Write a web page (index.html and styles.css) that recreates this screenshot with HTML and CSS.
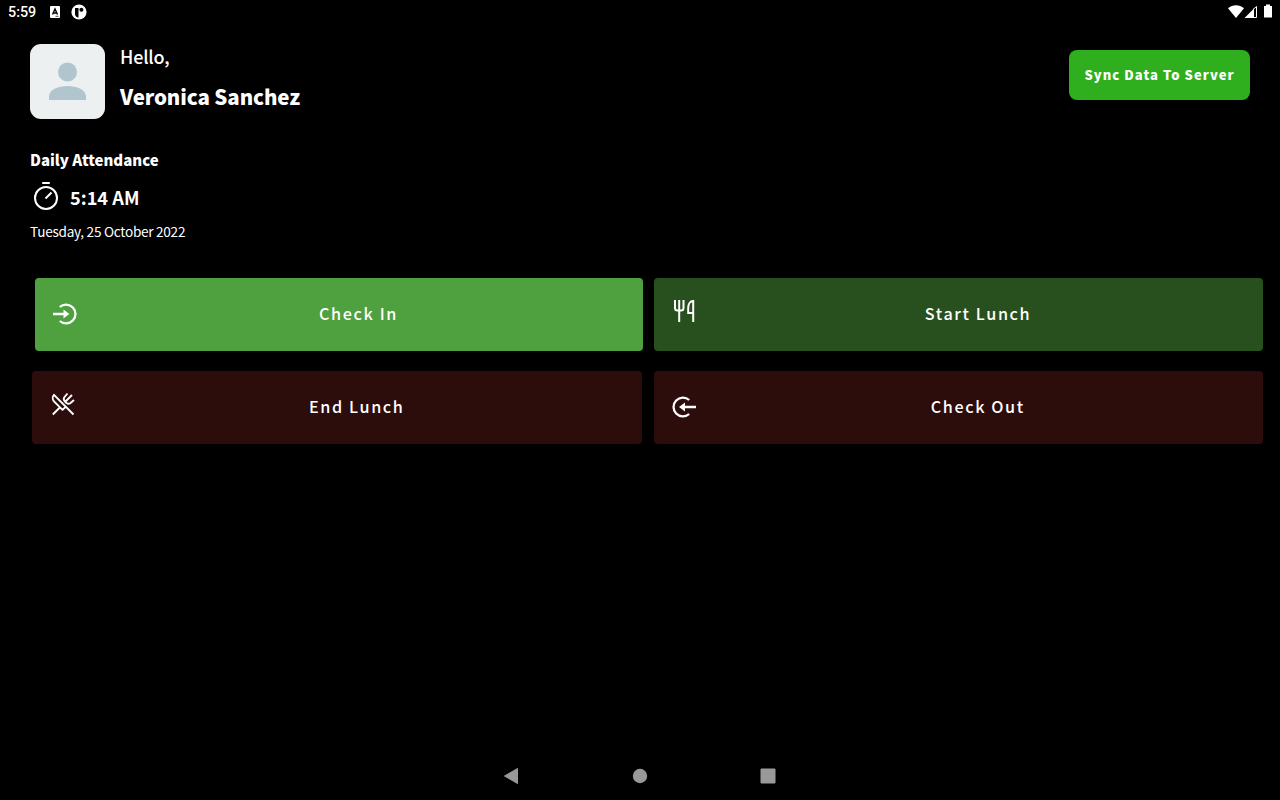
FILE: index.html
```
<!DOCTYPE html>
<html lang="en">
<head>
    <meta charset="UTF-8">
    <meta name="viewport" content="width=device-width, initial-scale=1.0">
    <title>Daily Attendance</title>
    <link rel="stylesheet" href="styles.css">
</head>
<body>
    <div class="status-bar">
        <span class="clock">5:59</span>
        <svg class="status-app" width="10" height="12" viewBox="0 0 10 12">
            <rect width="10" height="12" rx="1" fill="#fff"/>
            <path d="M2.500 8.500 5 3l2.500 5.500M3.500 7h3" fill="none" stroke="#000" stroke-width="1.400"/>
            <path d="M5.500 10.300h3" stroke="#000" stroke-width="0.700"/>
        </svg>
        <svg class="status-p" width="16" height="16" viewBox="0 0 16 16">
            <circle cx="8" cy="8" r="7.600" fill="#fff"/>
            <path d="M4 4h3.500v9.500C5.500 13.300 4 12 4 10z" fill="#000"/>
            <circle cx="10.400" cy="5.800" r="2" fill="#000"/>
        </svg>
        <svg class="status-right" width="46" height="16" viewBox="0 0 46 16">
            <path d="M0 5.300C4.500 1.300 11.500 1.300 16 5.300L8 15z" fill="#fff"/>
            <path d="M16.500 15 26 5.500V15z" fill="#fff"/>
            <path d="M25 6.500 28.500 3.500V14.500H25" fill="none" stroke="#fff"/>
            <path d="M36 3h2V1.500h4V3h2v11.500h-8z" fill="#fff"/>
        </svg>
    </div>

    <div class="header">
        <div class="avatar">
            <svg width="75" height="75" viewBox="0 0 75 75" fill="#b0c5cd">
                <circle cx="37.500" cy="28" r="9.500"/>
                <path d="M19 56v-3.500C19 46 28 42 37.500 42S56 46 56 52.500V56z"/>
            </svg>
        </div>
        <div class="user">
            <div class="hello">Hello,</div>
            <div class="name">Veronica Sanchez</div>
        </div>
        <button class="sync">Sync Data To Server</button>
    </div>

    <div class="attendance">
        <div class="title">Daily Attendance</div>
        <div class="time">
            <svg width="32" height="32" viewBox="0 0 32 32" fill="none" stroke="#fff" stroke-width="2">
                <circle cx="16" cy="17" r="11"/>
                <path d="M12.200 2h7.600M15.500 17.500l6-6"/>
            </svg>
            <span>5:14 AM</span>
        </div>
        <div class="date">Tuesday, 25 October 2022</div>
    </div>

    <div class="actions">
        <div class="row row-top">
            <button class="action check-in">
                <svg width="32" height="32" viewBox="0 0 32 32" fill="none" stroke="#fff" stroke-width="2.300">
                    <path d="M9.800 9a9.400 9.400 0 1 1 0 14M3 16h12"/>
                    <path d="M13.500 11.500 19.300 16l-5.800 4.500z" fill="#fff" stroke="none"/>
                </svg>
                <span>Check In</span>
            </button>
            <button class="action start-lunch">
                <svg class="cutlery" width="32" height="32" viewBox="0 0 32 32" fill="none" stroke="#fff" stroke-width="2">
                    <path d="M6 5v8q0 2.500 2.500 2.500h3.500q2.500 0 2.500-2.500V5M10.200 5v22M24.200 27V6c-3 0-5 3-5 7V18h5"/>
                </svg>
                <span>Start Lunch</span>
            </button>
        </div>
        <div class="row">
            <button class="action end-lunch">
                <svg class="cutlery" width="32" height="32" viewBox="0 0 32 32" fill="none" stroke="#fff" stroke-width="1.900" stroke-linejoin="round">
                    <path d="M26.500 26.500 7 6.800c-2 2-1.500 5 .5 7l8 8 3-3M5.800 26.500l7-7M18 14l7-7M20.500 5.500l-3 3.500q-1.500 2 0 4l2 2q2 1.500 4 0l3.500-3"/>
                </svg>
                <span>End Lunch</span>
            </button>
            <button class="action check-out">
                <svg width="32" height="32" viewBox="0 0 32 32" fill="none" stroke="#fff" stroke-width="2.300">
                    <path d="M20.200 9a9.400 9.400 0 1 0 0 14M14 16h13"/>
                    <path d="M16 11.500 10 16l6 4.500z" fill="#fff" stroke="none"/>
                </svg>
                <span>Check Out</span>
            </button>
        </div>
    </div>

    <div class="nav-bar">
        <svg width="18" height="18" viewBox="0 0 18 18" fill="#999"><path d="M14.500 1.500v15L1.500 9z" stroke="#999" stroke-linejoin="round"/></svg>
        <svg width="16" height="16" viewBox="0 0 16 16" fill="#999"><circle cx="8" cy="8" r="7.200"/></svg>
        <svg width="18" height="16" viewBox="-1 0 18 16" fill="#999"><rect x="0.500" y="0.500" width="15" height="15" rx="1"/></svg>
    </div>
</body>
</html>
```
FILE: styles.css
```
* {
    box-sizing: border-box;
}
body {
    margin: 0;
    height: 100vh;
    display: flex;
    flex-direction: column;
    overflow: hidden;
    background: #000;
    color: #fff;
    font-family: "Noto Sans CJK SC", sans-serif;
}
svg {
    display: block;
    flex: none;
}
button {
    border: none;
    padding: 0;
    color: #fff;
    font-family: inherit;
}
.status-bar {
    display: flex;
    align-items: center;
    height: 24px;
    padding: 0 6px 0 8px;
}
.clock {
    width: 42px;
    font: 500 14.3px/24px Roboto, sans-serif;
}
.status-p {
    margin-left: 11px;
}
.status-right {
    margin-left: auto;
    margin-bottom: 3px;
}
.header {
    display: flex;
    align-items: flex-start;
    height: 95px;
    padding: 20px 30px 0;
}
.avatar {
    width: 75px;
    height: 75px;
    border-radius: 11px;
    background: #ecf0f1;
}
.user {
    margin: -1px 0 0 15px;
}
.hello {
    font-size: 18px;
    font-weight: 500;
    line-height: 26px;
    letter-spacing: -0.2px;
}
.name {
    margin-top: 12px;
    font-size: 20.5px;
    font-weight: 900;
    line-height: 30px;
    letter-spacing: -0.1px;
}
.sync {
    width: 181px;
    height: 50px;
    margin: 6px 0 0 auto;
    padding-bottom: 2px;
    border-radius: 8px;
    background: #30af1e;
    font-size: 13px;
    font-weight: 900;
    letter-spacing: 1.05px;
}
.attendance {
    padding: 30px 30px 0;
}
.title {
    font-size: 15px;
    font-weight: 900;
    line-height: 22px;
}
.time {
    display: flex;
    align-items: center;
    gap: 8px;
    height: 32px;
    margin-top: 10px;
    font-size: 18.2px;
    font-weight: 700;
}
.date {
    margin-top: 7px;
    font-size: 13.6px;
    line-height: 22px;
    letter-spacing: -0.27px;
}
.actions {
    margin-top: 36px;
}
.row {
    display: flex;
    gap: 12px;
    height: 73px;
    padding: 0 17px 0 32px;
}
.row-top {
    gap: 11px;
    margin-bottom: 20px;
    padding-left: 35px;
}
.action {
    display: flex;
    flex: 1;
    align-items: center;
    padding: 0 0 2px 15px;
    border-radius: 4px;
    font-size: 16.2px;
    font-weight: 500;
    letter-spacing: 1.6px;
}
.action span {
    flex: 1;
    margin: 0 0 2px -8px;
}
.cutlery {
    margin-bottom: 5px;
}
.check-in {
    flex: 0 0 608px;
    background: #4fa03f;
}
.start-lunch {
    background: #27501e;
}
.end-lunch,
.check-out {
    background: #2c0d0b;
}
.end-lunch span {
    margin-left: -7px;
}
.nav-bar {
    display: flex;
    align-items: center;
    justify-content: center;
    gap: 111px;
    height: 48px;
    margin-top: auto;
}
```
